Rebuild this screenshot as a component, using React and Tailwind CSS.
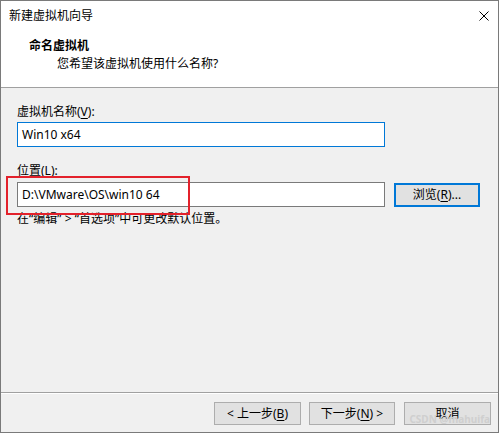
const font = { fontFamily: '"Noto Sans", "Noto Sans CJK SC", sans-serif' };

const U = ({ children }) => <span className="underline underline-offset-2">{children}</span>;

const Btn = ({ children, className = "" }) => (
  <button
    className={`h-[23px] bg-[#e1e1e1] border border-[#adadad] text-[12px] leading-none text-black flex items-center justify-center ${className}`}
  >
    {children}
  </button>
);

export default function App() {
  return (
    <div
      className="relative w-[499px] h-[433px] border border-[#7a7a7a] bg-[#f0f0f0] flex flex-col text-black text-[12px]"
      style={font}
    >
      {/* title bar */}
      <div className="h-[29px] bg-white flex items-center justify-between pl-[8px] pr-[9px]">
        <span className="leading-4">新建虚拟机向导</span>
        <svg width="10" height="10" viewBox="0 0 10 10" className="mr-[0px]">
          <path d="M0.5 0.5 L9.5 9.5 M9.5 0.5 L0.5 9.5" stroke="#000" strokeWidth="1" />
        </svg>
      </div>

      {/* header */}
      <div className="h-[58px] bg-white border-b border-[#a0a0a0] pl-[28px] pt-[8px]">
        <div className="leading-4 font-bold">命名虚拟机</div>
        <div className="leading-4 mt-[2px] pl-[28px]">您希望该虚拟机使用什么名称?</div>
      </div>

      {/* body */}
      <div className="pl-[16px] pt-[16px] flex flex-col">
        <div className="leading-4">
          虚拟机名称(<U>V</U>):
        </div>
        <div className="mt-[2px] w-[368px] h-[25px] bg-white border border-[#0078d7] flex items-center pl-[4px] leading-4">
          Win10 x64
        </div>

        <div className="leading-4 mt-[16px]">
          位置(<U>L</U>):
        </div>
        <div className="mt-[3px] flex items-center">
          <div className="w-[368px] h-[25px] bg-white border border-[#7a7a7a] flex items-center pl-[4px] leading-4">
            D:\VMware\OS\win10 64
          </div>
          <button className="ml-[9px] mt-[1px] w-[86px] h-[24px] bg-[#e1e1e1] border-2 border-[#0078d7] flex items-center justify-center leading-none">
            浏览(<U>R</U>)...
          </button>
        </div>
        <div className="leading-4 mt-[4px]">在“编辑” > “首选项”中可更改默认位置。</div>
      </div>

      {/* footer */}
      <div className="mt-auto">
        <div className="h-px bg-[#a0a0a0]" />
        <div className="h-px bg-white" />
        <div className="h-[38px] flex justify-end pr-[7px] pt-[8px]">
          <Btn className="w-[87px]">
            &lt; 上一步(<U>B</U>)
          </Btn>
          <Btn className="w-[86px] ml-[8px]">
            下一步(<U>N</U>) &gt;
          </Btn>
          <Btn className="w-[87px] ml-[9px]">取消</Btn>
        </div>
      </div>

      {/* annotation */}
      <div className="absolute left-[5px] top-[175px] w-[184px] h-[39px] border-2 border-[#e3212b]" />
      <div className="absolute right-[8px] bottom-[8px] text-[10px] font-bold text-[#cfcfcf] leading-none">
        CSDN @mahuifa
      </div>
    </div>
  );
}
